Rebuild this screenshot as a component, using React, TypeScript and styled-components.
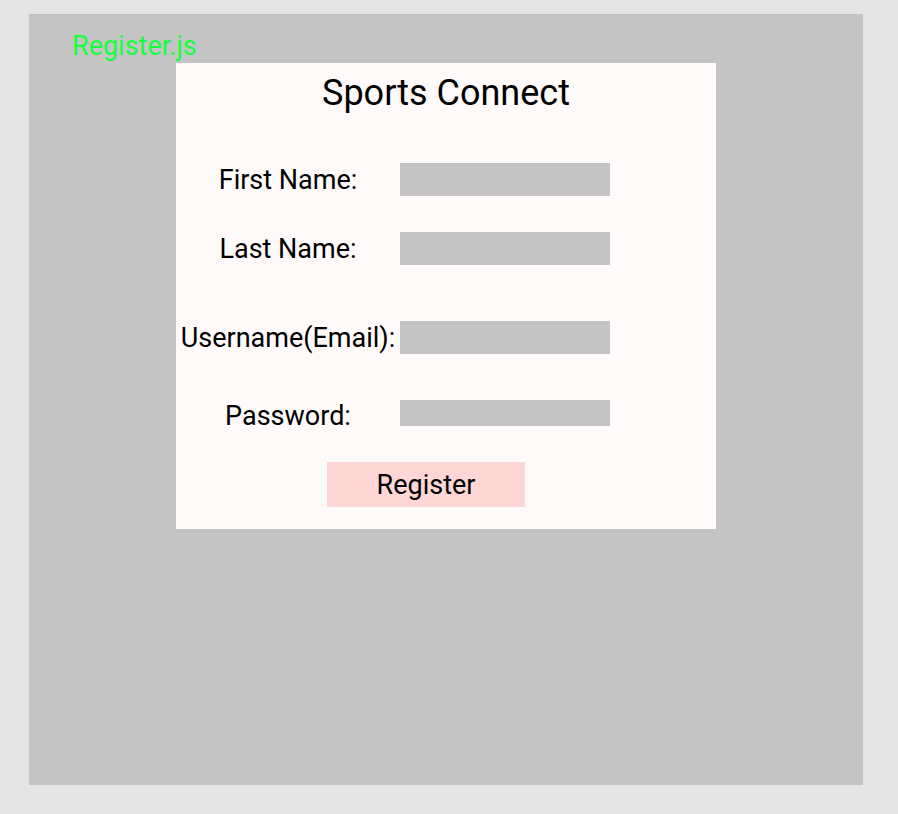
import React from "react";
import styled, { createGlobalStyle } from "styled-components";

const GlobalStyle = createGlobalStyle`
  body {
    margin: 0;
    background: #e5e5e5;
    font-family: Roboto, "Liberation Sans", Arial, sans-serif;
  }
`;

const Frame = styled.div`
  margin: 14px 0 0 29px;
  width: 834px;
  height: 771px;
  background: #c4c4c4;
  box-sizing: border-box;
`;

const FileName = styled.div`
  padding: 17px 0 0 43px;
  height: 32px;
  font-size: 27px;
  line-height: 30px;
  color: #14ff3c;
`;

const Card = styled.div`
  margin-left: 147px;
  width: 540px;
  height: 466px;
  background: #fffafa;
  display: flex;
  flex-direction: column;
  padding-top: 9px;
  box-sizing: border-box;
`;

const Title = styled.h1`
  margin: 0;
  font-size: 36px;
  font-weight: 400;
  line-height: 42px;
  text-align: center;
  color: #000;
`;

const Row = styled.div<{ $gap: number; $height: number }>`
  display: flex;
  align-items: center;
  margin-top: ${(p) => p.$gap}px;
  height: ${(p) => p.$height}px;
`;

const Label = styled.label<{ $shift?: number }>`
  width: 224px;
  text-align: center;
  font-size: 27px;
  line-height: 30px;
  color: #000;
  position: relative;
  top: ${(p) => p.$shift || 0}px;
`;

const Input = styled.input`
  width: 210px;
  height: 100%;
  box-sizing: border-box;
  border: none;
  background: #c4c4c4;
  padding: 0 8px;
  font: inherit;
  outline: none;
`;

const Button = styled.button`
  margin: 36px 0 0 151px;
  width: 198px;
  height: 45px;
  border: none;
  background: #ffd6d6;
  font-family: Roboto, "Liberation Sans", Arial, sans-serif;
  font-size: 27px;
  color: #000;
  padding: 0;
  cursor: pointer;
`;

const fields = [
  { label: "First Name:", gap: 49, height: 33, type: "text" },
  { label: "Last Name:", gap: 36, height: 33, type: "text" },
  { label: "Username(Email):", gap: 56, height: 33, type: "email" },
  { label: "Password:", gap: 46, height: 26, type: "password", shift: 3 },
];

const App: React.FC = () => {
  return (
    <>
      <GlobalStyle />
      <Frame>
        <FileName>Register.js</FileName>
        <Card>
          <Title>Sports Connect</Title>
          {fields.map((f) => (
            <Row key={f.label} $gap={f.gap} $height={f.height}>
              <Label $shift={f.shift}>{f.label}</Label>
              <Input type={f.type} />
            </Row>
          ))}
          <Button>Register</Button>
        </Card>
      </Frame>
    </>
  );
};

export default App;
